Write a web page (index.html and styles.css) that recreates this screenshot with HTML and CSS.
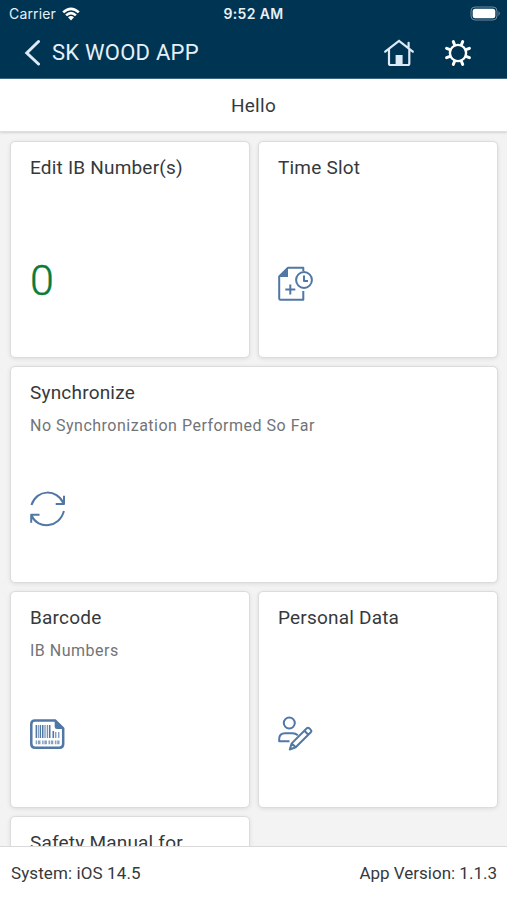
FILE: index.html
```html
<!DOCTYPE html>
<html lang="en">
<head>
<meta charset="utf-8">
<title>SK Wood App</title>
<link rel="stylesheet" href="styles.css">
</head>
<body>
<div class="app">
  <header class="header">
    <div class="status">
      <div class="carrier"><span>Carrier</span>
        <svg class="wifi" width="18" height="14" viewBox="0 0 18 14"><path d="M.3 4.4Q9-3.4 17.7 4.4L15.9 6.2Q9 .2 2.1 6.2Z"/><path d="M3.2 7.4Q9 2.2 14.8 7.4L13 9.2Q9 5.7 5 9.2Z"/><path d="M6 10.3Q9 7.7 12 10.3L9 13.5Z"/></svg>
      </div>
      <div class="time">9:52 AM</div>
      <svg class="battery" width="31" height="15" viewBox="0 0 31 15"><rect x="1" y="1" width="26" height="13" rx="4" fill="none" stroke="#71899c"/><rect x="2.7" y="2.8" width="22.6" height="9.4" rx="2.5" fill="#fff"/><path d="M28.5 5Q31 7.5 28.5 10Z" fill="#71899c"/></svg>
    </div>
    <div class="bar">
      <svg class="back" width="18" height="28" viewBox="0 0 18 28"><path d="M16.5 2.5 4.8 14 16.5 25"/></svg>
      <h1 class="title">SK WOOD APP</h1>
      <svg class="home" width="30" height="28" viewBox="0 0 30 28"><path d="M1.2 12.7 15 1.8 28.8 12.7M5 10.5V24.5Q5 26 6.5 26H23.7Q25.3 26 25.3 24.5V10.5M24.6 3.8V9"/><path class="door" d="M11.6 16h7v10h-7z"/></svg>
      <svg class="gear" width="28" height="28" viewBox="-14 -14 28 28"><circle r="8.1"/><path d="M3.3-8 4.7-11.4M8-3.3 11.4-4.7M8 3.3 11.4 4.7M3.3 8 4.7 11.4M-3.3 8-4.7 11.4M-8 3.3-11.4 4.7M-8-3.3-11.4-4.7M-3.3-8-4.7-11.4"/></svg>
    </div>
  </header>
  <div class="greeting"><span>Hello</span></div>
  <main class="tiles">
    <section class="tile">
      <h2>Edit IB Number(s)</h2>
      <div class="count">0</div>
    </section>
    <section class="tile">
      <h2>Time Slot</h2>
      <svg class="icon" viewBox="0 0 36 36"><path d="M25.3 5V1.8H10L1.2 10.5V32.5Q1.2 33.8 2.5 33.8H25.3V25M12.3 18.5v10M7.3 23.5h10"/><path class="solid" d="M10 1.5V11H1Z"/><circle cx="26" cy="14" r="7.9"/><path d="M26 9.5V15h4"/></svg>
    </section>
    <section class="tile wide">
      <h2>Synchronize</h2>
      <p>No Synchronization Performed So Far</p>
      <svg class="icon" viewBox="0 0 36 36"><path d="M1.5 14C6.5-2 27-2.5 33.6 12.5M34 4.7V13H25.7M33.9 20C29.5 37 8 39 1.5 24.5M1.2 31.8V23.8H9.5"/></svg>
    </section>
    <section class="tile">
      <h2>Barcode</h2>
      <p>IB Numbers</p>
      <svg class="icon" viewBox="0 0 36 36"><path class="frame" d="M25 4.4H5Q1.3 4.4 1.3 8V28Q1.3 31.7 5 31.7H29.5Q33.2 31.7 33.2 28V12.5Z"/><path class="solid" d="M24.7 3.3 34.3 13H27Q24.7 13 24.7 10.7Z"/><path class="bars" d="M6.4 9v13M12.7 9v13M19.7 9v13M23.3 15v7"/><path class="thin" d="M8.8 9v13M10.5 9v13M15 9v13M17.3 9v13M25.8 16v6M28.8 16v6"/><path class="bits" d="M5.7 26.4H29.5"/></svg>
    </section>
    <section class="tile">
      <h2>Personal Data</h2>
      <svg class="icon" viewBox="0 0 36 36"><circle cx="11.3" cy="7" r="5.5"/><path d="M11.5 25.2H1.2V23Q1.2 17.2 7 17.2H14.5Q17.5 17.2 19.8 19.2M11.8 33.5 13.7 27.4 28.8 12.3Q30 11.2 31.2 12.3L32.8 13.9Q34 15 32.8 16.2L17.7 31.2ZM26.4 14.7 30.4 18.7M13.7 27.4 17.7 31.2"/></svg>
    </section>
    <section class="tile">
      <h2>Safety Manual for</h2>
    </section>
  </main>
  <footer class="footer"><span class="system">System: iOS 14.5</span><span>App Version: 1.1.3</span></footer>
</div>
</body>
</html>
```
FILE: styles.css
```css
* { box-sizing: border-box; }
body { margin: 0; font-family: Roboto, "Noto Sans", sans-serif; color: #36393c; }
.app { width: 507px; height: 900px; display: flex; flex-direction: column; overflow: hidden; background: #f3f3f3; }
h1, h2, p { margin: 0; font-weight: 400; white-space: nowrap; }
svg { display: block; flex: none; }

.header { height: 79px; flex: none; background: #003453; color: #e6f0f8; border-bottom: 1px solid #3d6780; }
.status { height: 27px; display: grid; grid-template-columns: 1fr auto 1fr; align-items: center; padding: 0 6px 0 9px; font-family: Inter, sans-serif; }
.carrier { display: flex; align-items: center; gap: 6px; font-size: 14px; letter-spacing: .15px; }
.wifi { fill: #fff; }
.time { font-size: 14px; font-weight: 600; letter-spacing: .35px; margin-right: 3px; }
.battery { justify-self: end; }
.bar { height: 51px; display: flex; align-items: center; padding: 0 35px 0 22px; }
.back { fill: none; stroke: #dceaf5; stroke-width: 3; stroke-linecap: round; }
.title { font-size: 22px; line-height: 28px; margin-left: 12px; letter-spacing: .25px; }
.home { margin-left: auto; fill: none; stroke: #dceaf5; stroke-width: 2.2; stroke-linecap: round; }
.home .door { fill: #dceaf5; stroke: none; }
.gear { margin-left: 30px; fill: none; stroke: #fff; stroke-width: 2.4; stroke-linecap: round; }
.gear path { stroke-width: 3; }

.greeting { height: 53px; flex: none; display: flex; align-items: center; justify-content: center; background: #fff; border-bottom: 1px solid #dedede; box-shadow: 0 1px 2px #0002; font-size: 19px; letter-spacing: .3px; }
.tiles { flex: 1; min-height: 0; overflow: hidden; display: grid; grid-template-columns: 240px 240px; grid-auto-rows: 217px; gap: 8px; padding: 9px 9px 0 10px; align-content: start; }
.tile { display: flex; flex-direction: column; padding: 14px 19px 0; background: #fff; border: 1px solid #dcdcdc; border-radius: 5px; box-shadow: 0 1px 4px #00000018; }
.wide { grid-column: span 2; }
.tile h2 { font-size: 19px; line-height: 24px; letter-spacing: .2px; }
.tile p { font-size: 16px; line-height: 20px; margin-top: 11px; letter-spacing: .5px; color: #717477; }
.count { margin-top: 77px; font-size: 43px; line-height: 46px; font-weight: 300; color: #087b36; -webkit-text-stroke: .4px #087b36; }
.icon { width: 36px; height: 36px; margin-top: 86px; fill: none; stroke: #5177a5; stroke-width: 2; stroke-linejoin: round; }
.tile p + .icon { margin-top: 55px; }
.icon .frame { stroke-width: 2.5; }
.icon .solid { fill: #5177a5; stroke: none; }
.icon .bars { stroke-width: 1.6; }
.icon .thin { stroke-width: 1; }
.icon .bits { stroke-width: 3.6; stroke-dasharray: 1.5 .8 2.5 1.6; opacity: .7; }
.footer { height: 54px; flex: none; display: flex; align-items: center; justify-content: space-between; padding: 0 10px 1px 11px; background: #fff; border-top: 1px solid #d9d9d9; font-size: 17px; }
.system { letter-spacing: .1px; }
```
